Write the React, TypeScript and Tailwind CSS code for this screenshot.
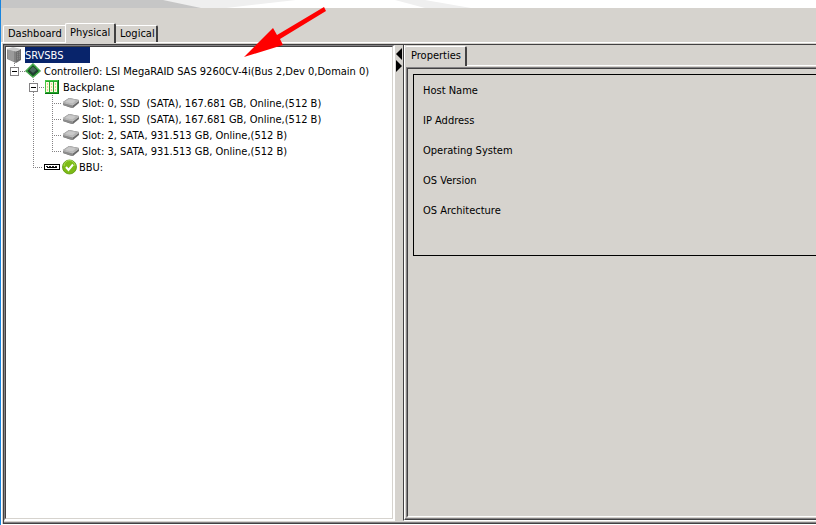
import { useState } from "react";
import type { ReactNode } from "react";

type Guide = "blank" | "line" | "tee" | "elbow";

const drives = [
  "Slot: 0, SSD  (SATA), 167.681 GB, Online,(512 B)",
  "Slot: 1, SSD  (SATA), 167.681 GB, Online,(512 B)",
  "Slot: 2, SATA, 931.513 GB, Online,(512 B)",
  "Slot: 3, SATA, 931.513 GB, Online,(512 B)",
];

const properties = ["Host Name", "IP Address", "Operating System", "OS Version", "OS Architecture"];

function GuideCell({ kind }: { kind: Guide }) {
  return (
    <svg width="19" height="16" className="shrink-0" shapeRendering="crispEdges" stroke="#848284" strokeDasharray="1 1" aria-hidden="true">
      {kind !== "blank" && <path d={kind === "elbow" ? "M8.5 0V9" : "M8.5 0V16"} />}
      {(kind === "tee" || kind === "elbow") && <path d="M10 8.5H18" />}
    </svg>
  );
}

function Toggle({ open, below, label, onClick }: { open: boolean; below?: boolean; label: string; onClick: () => void }) {
  return (
    <button type="button" aria-label={label} aria-expanded={open} onClick={onClick} className="h-4 w-[19px] shrink-0">
      <svg width="19" height="16" shapeRendering="crispEdges" fill="none" aria-hidden="true">
        <path d={below ? "M8.5 0V4M8.5 13V16M14 8.5H19" : "M8.5 0V4M14 8.5H19"} stroke="#848284" strokeDasharray="1 1" />
        <rect x="4.5" y="4.5" width="8" height="8" fill="#fff" stroke="#848284" />
        <path d={open ? "M6 8.5H11" : "M6 8.5H11M8.5 6V11"} stroke="#000" />
      </svg>
    </button>
  );
}

function ServerIcon() {
  return (
    <svg width="16" height="16" viewBox="0 0 16 16" className="shrink-0" aria-hidden="true">
      <path d="M1 2 7 0l8 2-5 2z" fill="#c9c9c9" />
      <path d="M1 2l9 2v12l-9-4z" fill="#8c8c8c" />
      <path d="M10 4l5-2v11l-5 3z" fill="#6e6e6e" />
      <path d="M3 3v9.500M5 3.500V13M7 4v10" stroke="#a9a9a9" />
      <path d="M9 4.500v11" stroke="#7a7a7a" />
      <path d="M1 2l9 2 4-1.500" stroke="#cfcfcf" fill="none" />
      <path d="M11 6l3-1M11 8l3-1M11 10l3-1M11 12l3-1" stroke="#9a9a9a" strokeDasharray="1 1" />
    </svg>
  );
}

function ControllerIcon() {
  return (
    <svg width="16" height="16" viewBox="0 0 16 16" className="shrink-0" aria-hidden="true">
      <path d="M8 0l8 8-8 7-8-7z" fill="#2d8c35" />
      <path d="M8 1l7 7-7 6-7-6z" fill="none" stroke="#62c768" strokeDasharray="1 1" />
      <path d="M8 3l5 5-5 4.500L3 8z" fill="#253d36" stroke="#164d23" />
      <path d="M8 3.500l3.500 3.500L8 10 4.500 7z" fill="#486b5d" />
    </svg>
  );
}

function BackplaneIcon() {
  return (
    <svg width="16" height="16" viewBox="0 0 16 16" shapeRendering="crispEdges" className="shrink-0" aria-hidden="true">
      <rect x="1" y="1" width="14" height="14" fill="#25a72b" />
      <path d="M1 14.500H14.500V1" fill="none" stroke="#087510" />
      <path d="M1.500 14V1.500H14" fill="none" stroke="#48c846" />
      <path d="M2 3h3v10H2zM6 3h3v10H6zM10 3h3v10h-3z" fill="#fffbe0" />
      <path d="M3.500 4v8M7.500 4v8M11.500 4v8" stroke="#e8c99a" strokeDasharray="2 1" />
    </svg>
  );
}

function DriveIcon() {
  return (
    <svg width="16" height="16" viewBox="0 0 16 16" className="shrink-0" aria-hidden="true">
      <path d="M0 7 6 3l10 2v3l-6 5-3-.500L0 10z" fill="#6a6a6a" />
      <path d="M0 7 6 3l10 2-6 5z" fill="#b4b4b4" />
      <path d="M2 7l4-3 7 1.500-3.500 3z" fill="#c9c9c9" />
      <path d="M0 7.500l10 2.500v3L0 10z" fill="#8c8c8c" />
      <path d="M0 7.500l10 2.500 6-4.500" fill="none" stroke="#d9d9d9" strokeWidth="0.700" />
    </svg>
  );
}

function BatteryIcon() {
  return (
    <svg width="16" height="16" viewBox="0 0 16 16" shapeRendering="crispEdges" className="shrink-0" aria-hidden="true">
      <rect x="0.500" y="5.500" width="15" height="5" fill="#fff" stroke="#000" />
      <path d="M2 7.500H14" stroke="#222" strokeDasharray="2 1" />
      <path d="M3 8.500H13" stroke="#000" />
    </svg>
  );
}

function OkIcon() {
  return (
    <svg width="15" height="16" viewBox="0 0 15 16" className="shrink-0" aria-hidden="true">
      <circle cx="7.500" cy="8" r="7" fill="#7dbb16" stroke="#5c960d" strokeWidth="0.800" />
      <path d="M2 7a5.500 5.500 0 0 1 11 0" fill="none" stroke="#a8dc50" />
      <path d="M4 8l2.500 3L11 5.500" fill="none" stroke="#fff" strokeWidth="2" />
    </svg>
  );
}

function TreeRow({ children }: { children: ReactNode }) {
  return <div className="flex h-4 items-start whitespace-pre leading-[18px]">{children}</div>;
}

function DeviceTree() {
  const [controllerOpen, setControllerOpen] = useState(true);
  const [backplaneOpen, setBackplaneOpen] = useState(true);

  return (
    <div>
      <TreeRow>
        <ServerIcon />
        <span className="ml-[3px] h-4 w-[65px] bg-[#08246b] text-white">SRVSBS</span>
      </TreeRow>
      <TreeRow>
        <Toggle label="Controller0" open={controllerOpen} onClick={() => setControllerOpen(!controllerOpen)} />
        <ControllerIcon />
        <span className="ml-[3px]">Controller0: LSI MegaRAID SAS 9260CV-4i(Bus 2,Dev 0,Domain 0)</span>
      </TreeRow>
      {controllerOpen && (
        <>
          <TreeRow>
            <GuideCell kind="blank" />
            <Toggle below label="Backplane" open={backplaneOpen} onClick={() => setBackplaneOpen(!backplaneOpen)} />
            <BackplaneIcon />
            <span className="ml-[3px]">Backplane</span>
          </TreeRow>
          {backplaneOpen &&
            drives.map((drive, i) => (
              <TreeRow key={drive}>
                <GuideCell kind="blank" />
                <GuideCell kind="line" />
                <GuideCell kind={i === drives.length - 1 ? "elbow" : "tee"} />
                <DriveIcon />
                <span className="ml-[3px]">{drive}</span>
              </TreeRow>
            ))}
          <TreeRow>
            <GuideCell kind="blank" />
            <GuideCell kind="elbow" />
            <BatteryIcon />
            <span className="ml-[2px] flex">
              <OkIcon />
            </span>
            <span className="ml-[2px]">BBU:</span>
          </TreeRow>
        </>
      )}
    </div>
  );
}

function Banner() {
  return (
    <svg className="block h-2 w-full bg-white" aria-hidden="true">
      <path d="M160 0H295L225 8H160z" fill="#efefef" />
      <path d="M0 0H162L200 8H0z" fill="#c6c6c6" />
      <path d="M394 0H424L470 8H424z" fill="#efefef" />
    </svg>
  );
}

function TopTabs() {
  return (
    <div role="tablist" className="flex h-[19px] items-end pl-[2px] leading-4">
      <button type="button" role="tab" aria-selected="false" className="h-[17px] w-[62px] rounded-tl-xs border-t border-l border-white pl-1 text-left">
        Dashboard
      </button>
      <button
        type="button"
        role="tab"
        aria-selected="true"
        className="z-10 -mb-px h-5 w-[51px] rounded-t-xs border-t border-r-2 border-l border-t-white border-r-[#424142] border-l-white bg-[#d6d3ce] pb-[2px] pl-1 text-left"
      >
        Physical
      </button>
      <button type="button" role="tab" aria-selected="false" className="h-[17px] w-[42px] rounded-tr-xs border-t border-r-2 border-t-white border-r-[#424142] pl-1 text-left">
        Logical
      </button>
    </div>
  );
}

function PropertiesPane() {
  return (
    <section className="flex min-w-0 flex-1 flex-col border-b border-l border-[#424142] border-b-white">
      <div className="flex flex-1 flex-col border-b border-l border-b-[#424142] border-l-white pt-px">
        <div role="tablist" className="flex h-[19px]">
          <button
            type="button"
            role="tab"
            aria-selected="true"
            className="z-10 -mb-px h-5 w-[62px] rounded-t-xs border-t border-r-2 border-t-white border-r-[#424142] bg-[#d6d3ce] pb-px pl-[6px] text-left"
          >
            Properties
          </button>
        </div>
        <div className="flex flex-1 flex-col border-t border-b border-t-white border-b-[#848284] pt-px pl-px">
          <div className="flex flex-1 flex-col border-t border-b border-l border-[#848284] border-b-[#d6d3ce]">
            <div className="flex-1 border-t border-b border-l border-[#424142] border-b-white pt-[5px] pl-[5px]">
              <ul className="border border-r-0 border-black pb-[30px] pl-[9px]">
                {properties.map((name) => (
                  <li key={name} className="h-[30px] leading-8">
                    {name}
                  </li>
                ))}
              </ul>
            </div>
          </div>
        </div>
      </div>
    </section>
  );
}

function PointerArrow() {
  return (
    <svg width="84" height="50" viewBox="0 0 84 50" className="pointer-events-none absolute top-[7px] left-[242px] z-20" aria-hidden="true">
      <path d="M1 50 30 21l4 7L81 0l2 4L37 32l3 6z" fill="#ff0000" />
    </svg>
  );
}

export default function App() {
  return (
    <div className="relative flex min-h-screen flex-col overflow-hidden border-l border-[#1884de] bg-[#d6d3ce] font-['DejaVu_Sans_Condensed','DejaVu_Sans',sans-serif] text-[11px] text-black">
      <Banner />
      <div className="h-[15px]" />
      <TopTabs />
      <div className="flex flex-1 flex-col border-t border-b border-l border-white pt-px pl-px">
        <main className="flex flex-1 flex-col border-t border-b border-l border-[#424142]">
          <div className="flex flex-1 flex-col border-b border-[#848284] pb-px">
            <div className="flex flex-1">
              <div className="flex w-[391px] shrink-0 border-t border-r-2 border-b-2 border-l border-[#848284] border-r-white border-b-white">
                <div className="flex-1 border border-[#424142] border-r-[#d6d3ce] border-b-[#d6d3ce] bg-white">
                  <DeviceTree />
                </div>
              </div>
              <div className="flex w-2 shrink-0 flex-col items-center pt-[3px]">
                <button type="button" aria-label="Collapse left pane" className="h-3 w-[6px]">
                  <svg width="6" height="12" aria-hidden="true">
                    <path d="M6 0v12L0 6z" />
                  </svg>
                </button>
                <button type="button" aria-label="Collapse right pane" className="h-3 w-[6px]">
                  <svg width="6" height="12" aria-hidden="true">
                    <path d="M0 0v12l6-6z" />
                  </svg>
                </button>
              </div>
              <PropertiesPane />
            </div>
          </div>
        </main>
      </div>
      <PointerArrow />
    </div>
  );
}
